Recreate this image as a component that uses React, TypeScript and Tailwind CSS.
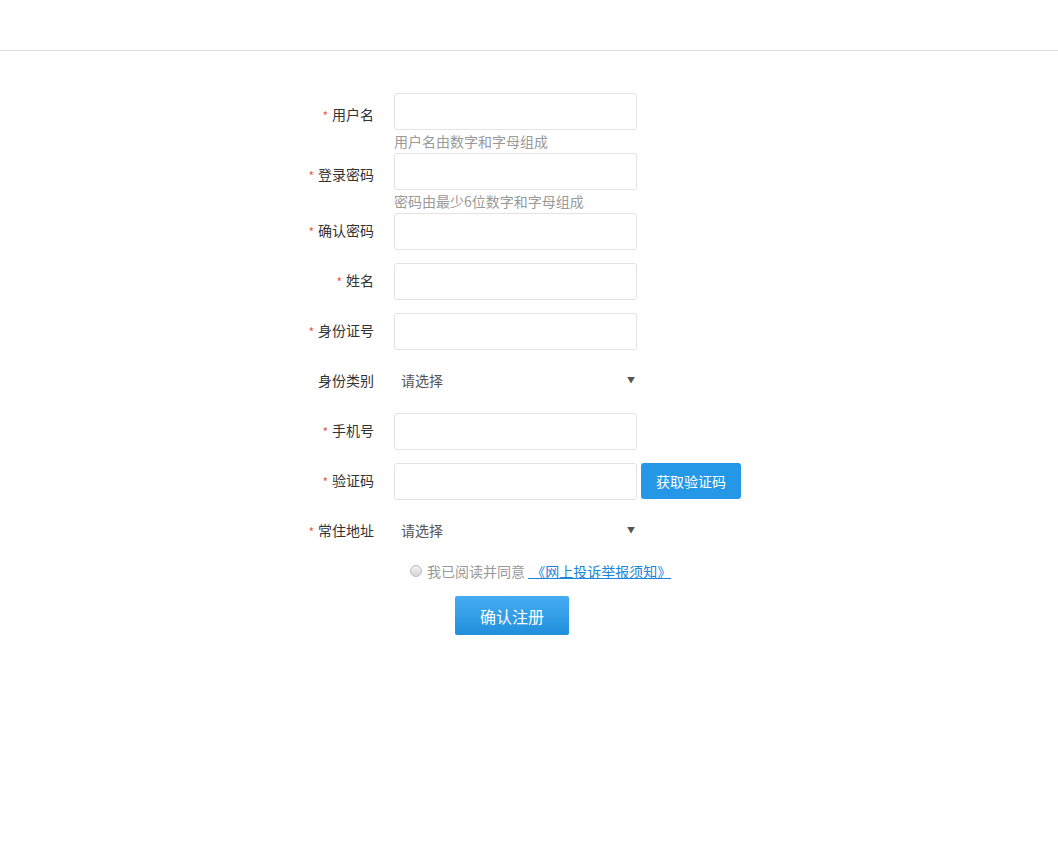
import React from 'react';

const font = { fontFamily: '"Microsoft YaHei", "Noto Sans CJK SC", "Noto Sans", sans-serif' };

const Label = ({ text, required = true, low = false }: { text: string; required?: boolean; low?: boolean }) => (
  <div className={`w-[74px] shrink-0 text-right text-[14px] text-[#333] whitespace-nowrap ${low ? 'pt-[6px]' : 'pb-[2px]'}`}>
    {required && <span className="text-[#ee5a45] text-[12px] mr-[4px] relative top-[1px]">*</span>}
    {text}
  </div>
);

const Field = ({ label, hint, required = true }: { label: string; hint?: string; required?: boolean }) => (
  <div className={hint ? '' : 'mb-[13px]'}>
    <div className="flex items-center h-[37px] gap-[20px]">
      <Label text={label} required={required} low={!!hint} />
      <input className="w-[243px] h-[37px] border border-[#e3e3e3] rounded-[3px] px-2 text-[14px] outline-none" />
    </div>
    {hint && (
      <div className="h-[23px] leading-[23px] pl-[94px] text-[14px] text-[#999]">{hint}</div>
    )}
  </div>
);

const SelectField = ({ label, required = true }: { label: string; required?: boolean }) => (
  <div className="flex items-center h-[37px] gap-[20px] mb-[13px]">
    <Label text={label} required={required} />
    <div className="w-[243px] h-[37px] flex items-center justify-between pl-[7px] pr-[2px] text-[14px] text-[#555]">
      <span className="pb-[3px]">请选择</span>
      <span className="text-[8px] text-[#555] relative -top-[2px]">▼</span>
    </div>
  </div>
);

export default function App() {
  return (
    <div className="min-h-[851px] bg-white" style={font}>
      <div className="h-[51px] border-b border-[#dcdcdc]" />
      <div className="w-[458px] mx-auto pt-[42px]">
        <Field label="用户名" hint="用户名由数字和字母组成" />
        <Field label="登录密码" hint="密码由最少6位数字和字母组成" />
        <Field label="确认密码" />
        <Field label="姓名" />
        <Field label="身份证号" />
        <SelectField label="身份类别" required={false} />
        <Field label="手机号" />
        <div className="flex items-center h-[37px] gap-[20px] mb-[13px]">
          <Label text="验证码" />
          <div className="flex items-start gap-[4px] h-[37px]">
            <input className="w-[243px] h-[37px] border border-[#e3e3e3] rounded-[3px] px-2 text-[14px] outline-none" />
            <button className="w-[100px] h-[36px] bg-[#2497e6] rounded-[3px] text-white text-[14px]">获取验证码</button>
          </div>
        </div>
        <SelectField label="常住地址" />
        <div className="flex items-center h-[18px] pl-[110px] text-[14px] text-[#999] -mt-[1px]">
          <span className="w-[12px] h-[12px] rounded-full border border-[#bbb] bg-gradient-to-b from-[#f2f2f2] to-[#d6d6d6] mr-[5px]" />
          <span>我已阅读并同意</span>
          <a href="#" className="text-[#1a84d9] underline ml-[3px]">&nbsp;《网上投诉举报须知》</a>
        </div>
        <div className="pl-[155px] mt-[16px]">
          <button className="w-[114px] h-[39px] rounded-[2px] bg-gradient-to-b from-[#45acf2] to-[#1f8fdc] text-white text-[16px]">确认注册</button>
        </div>
      </div>
    </div>
  );
}
